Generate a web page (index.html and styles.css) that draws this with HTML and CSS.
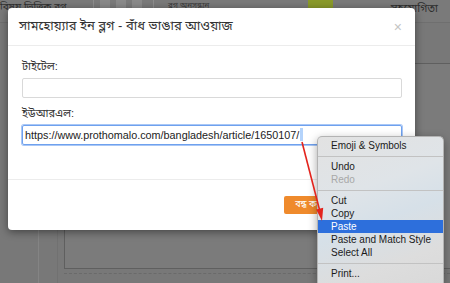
FILE: index.html
```html
<!DOCTYPE html>
<html lang="bn">
<head>
  <meta charset="UTF-8" />
  <meta name="viewport" content="width=device-width, initial-scale=1" />
  <title>সামহোয়্যার ইন ব্লগ</title>
  <link rel="stylesheet" href="styles.css">
</head>
<body>
  <div class="site">
    <div class="top-bar">
      <div class="top-left">বিষয় ভিত্তিক ব্লগ</div>
      <div class="top-tools">
        <span class="tool"></span>
        <span class="tool"></span>
        <span class="tool"></span>
      </div>
      <div class="top-search">ব্লগ অনুসন্ধান</div>
      <div class="search-go"></div>
      <div class="top-right">সহযোগিতা</div>
    </div>

    <div class="site-body">
      <div class="rail"></div>
      <div class="rail thin"></div>
      <div class="main-col">
        <div class="editor-box"></div>
        <div class="dashed"></div>
      </div>
    </div>
  </div>

  <div class="modal">
    <div class="modal-header">
      <h4>সামহোয়্যার ইন ব্লগ - বাঁধ ভাঙার আওয়াজ</h4>
      <span class="close">&times;</span>
    </div>

    <div class="modal-body">
      <div class="field">
        <label>টাইটেল:</label>
        <div class="input"></div>
      </div>
      <div class="field">
        <label>ইউআরএল:</label>
        <div class="input focused">https://www.prothomalo.com/bangladesh/article/1650107/<span class="sel"></span></div>
      </div>
    </div>

    <div class="modal-footer">
      <button class="btn">বন্ধ করুন</button>
      <button class="btn">যোগ করুন</button>
    </div>
  </div>

  <svg class="arrow" width="450" height="283" viewBox="0 0 450 283">
    <line x1="302" y1="142" x2="319.6" y2="210" stroke="#e3241d" stroke-width="1.6" />
    <polygon points="322,221 316.2,209.6 323.2,207.8" fill="#e3241d" />
  </svg>

  <div class="context-menu">
    <div class="item">Emoji &amp; Symbols</div>
    <div class="sep"></div>
    <div class="item">Undo</div>
    <div class="item disabled">Redo</div>
    <div class="sep"></div>
    <div class="item">Cut</div>
    <div class="item">Copy</div>
    <div class="item active">Paste</div>
    <div class="item">Paste and Match Style</div>
    <div class="item">Select All</div>
    <div class="sep"></div>
    <div class="item">Print...</div>
  </div>
</body>
</html>
```

FILE: styles.css
```css
body {
  margin: 0;
  width: 450px;
  height: 283px;
  overflow: hidden;
  background-color: #6c6c6c;
  font-family: 'Liberation Sans', Arial, 'Noto Sans Bengali', sans-serif;
  position: relative;
}

.site {
  height: 283px;
  display: flex;
  flex-direction: column;
}

.top-bar {
  height: 22px;
  display: flex;
  align-items: flex-start;
  background-color: #7a7a7a;
  border-bottom: 1px solid #6f6f6f;
  font-size: 10px;
  color: #2e2e2e;
}

.top-left {
  width: 93px;
  padding-top: 1px;
  white-space: nowrap;
  overflow: hidden;
}

.top-tools {
  display: flex;
  gap: 6px;
  padding: 0 8px 0 6px;
  height: 22px;
  border-left: 1px solid #8d8d8d;
  border-right: 1px solid #8d8d8d;
  width: 45px;
}

.tool {
  width: 10px;
  height: 9px;
  background-color: #8a8a8a;
}

.top-search {
  width: 140px;
  padding-left: 14px;
  font-size: 8px;
  padding-top: 1px;
  color: #3a3a3a;
}

.search-go {
  width: 25px;
  height: 22px;
  background-color: #8a9a2a;
}

.top-right {
  margin-left: auto;
  padding: 2px 12px 0 0;
  font-size: 11px;
}

.site-body {
  flex: 1;
  min-height: 0;
  display: flex;
  padding-left: 38px;
  background-color: #787878;
}

.rail {
  width: 18px;
  border-left: 1px solid #848484;
}

.rail.thin {
  width: 6px;
  border-left: 1px solid #717171;
}

.main-col {
  flex: 1;
  padding-top: 40px;
}

.editor-box {
  height: 204px;
  border: 1px solid #5f5f5f;
  border-right: none;
  background-color: #7b7b7b;
}

.dashed {
  margin-top: 4px;
  border-top: 1px dashed #6a6a6a;
}

/* modal */

.modal {
  position: absolute;
  left: 8px;
  top: 8px;
  width: 407px;
  background-color: #fff;
  border-radius: 4px;
  box-shadow: 0 2px 8px rgba(0,0,0,0.45);
  display: flex;
  flex-direction: column;
}

.modal-header {
  height: 37px;
  display: flex;
  align-items: center;
  justify-content: space-between;
  padding: 0 13px 0 11px;
  border-bottom: 1px solid #ececec;
}

.modal-header h4 {
  margin: 0;
  font-size: 13px;
  font-weight: normal;
  color: #333;
}

.close {
  font-size: 14px;
  color: #c4c4c4;
}

.modal-body {
  padding: 13px 13px 34px 14px;
  border-bottom: 1px solid #ececec;
}

.field + .field {
  margin-top: 8px;
}

.field label {
  display: block;
  font-size: 11px;
  line-height: 14px;
  color: #333;
  margin-bottom: 5px;
}

.input {
  height: 20px;
  box-sizing: border-box;
  border: 1px solid #d9d9d9;
  border-radius: 2px;
  font-size: 10.8px;
  line-height: 18px;
  padding-left: 2px;
  color: #222;
  white-space: nowrap;
}

.input.focused {
  border: 1px solid #6fa1ee;
  box-shadow: 0 0 0 1px #a9c7f6;
}

.sel {
  display: inline-block;
  width: 3px;
  height: 13px;
  margin-left: 1px;
  vertical-align: -2px;
  background-color: #b4d3fb;
}

.modal-footer {
  height: 50px;
  display: flex;
  align-items: center;
  justify-content: flex-end;
  gap: 5px;
  padding: 0 14px;
}

.btn {
  height: 18px;
  padding: 0 8px;
  border: none;
  border-radius: 2px;
  background-color: #ef8a2c;
  color: #fff;
  font-family: inherit;
  font-size: 9px;
  width: 56px;
  white-space: nowrap;
}

/* annotations */

.arrow {
  position: absolute;
  left: 0;
  top: 0;
  z-index: 5;
}

.context-menu {
  position: absolute;
  left: 317px;
  top: 136px;
  width: 125px;
  height: 145px;
  padding-top: 2px;
  border: 1px solid #b3b3b3;
  border-bottom: none;
  border-radius: 5px 5px 0 0;
  background-image: linear-gradient(160deg, #e2e2e2 0%, #dfe4e8 35%, #d6e0e8 55%, #dddddd 80%, #d9d9d9 100%);
  box-shadow: 0 3px 10px rgba(0,0,0,0.35);
  font-size: 10px;
  color: #1a1a1a;
  z-index: 4;
}

.item {
  height: 13px;
  line-height: 13px;
  padding-left: 13px;
}

.item.disabled {
  color: #a8a8a8;
}

.item.active {
  background-color: #2d6fdc;
  color: #fff;
}

.sep {
  height: 1px;
  margin: 4px 0 3px;
  background-color: #c2c2c2;
}
```
